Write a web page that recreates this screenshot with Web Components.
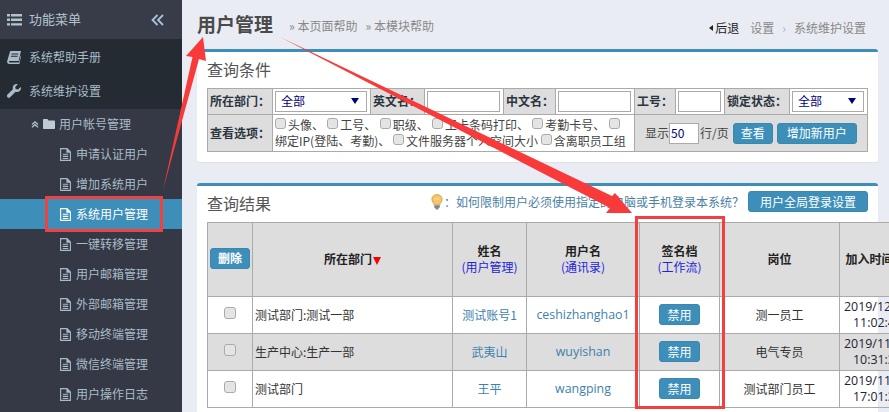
<!DOCTYPE html>
<html>
<head>
<meta charset="utf-8">
<title>用户管理</title>
<style>
html, body { margin: 0; height: 100%; overflow: hidden; }
body { font: 12px "Noto Sans CJK SC", "Noto Sans", sans-serif; background: #e9edf3; color: #333; }
</style>
</head>
<body>
<app-shell>
	<side-menu slot="side">
		<side-head>功能菜单</side-head>
		<side-group>
			<side-item icon="book">系统帮助手册</side-item>
			<side-item icon="wrench">系统维护设置</side-item>
		</side-group>
		<side-sub>用户帐号管理</side-sub>
		<side-leaf>申请认证用户</side-leaf>
		<side-leaf>增加系统用户</side-leaf>
		<side-leaf active>系统用户管理</side-leaf>
		<side-leaf>一键转移管理</side-leaf>
		<side-leaf>用户邮箱管理</side-leaf>
		<side-leaf>外部邮箱管理</side-leaf>
		<side-leaf>移动终端管理</side-leaf>
		<side-leaf>微信终端管理</side-leaf>
		<side-leaf>用户操作日志</side-leaf>
	</side-menu>
	<page-head></page-head>
	<query-panel></query-panel>
	<result-panel></result-panel>
	<note-arrows slot="over"></note-arrows>
</app-shell>

<script>
const blue = '#3d8fba';

const icons = {
	list: '<svg viewBox="0 0 15 12" width="15" height="12"><path fill="currentColor" d="M0 0h3v2.4H0zM4 0h11v2.4H4zM0 4.6h3V7H0zM4 4.6h11V7H4zM0 9.2h3v2.4H0zM4 9.2h11v2.4H4z"/></svg>',
	chevrons: '<svg viewBox="0 0 13 12" width="13" height="12"><path fill="none" stroke="currentColor" stroke-width="1.8" d="M6.5 1 1.5 6l5 5M12 1 7 6l5 5"/></svg>',
	book: '<svg viewBox="0 0 14 13" width="14" height="13"><path fill="currentColor" d="M3.2 0H14l-2.4 10H2.6C1.8 10 1.7 11.4 2.6 11.4H12L13.6 4.6 14 5 12.4 13H2.2C.6 13-.3 11.600 .2 10zM4.600 2.400 4.400 3.400h6.800l.2-1zM4 4.800 3.800 5.800h6.800l.2-1z"/></svg>',
	wrench: '<svg viewBox="0 0 14 14" width="14" height="14"><path fill="currentColor" d="M13.700 3.100 11 5.600 8.700 5.100 8.200 2.900 10.800.3C8.700-.4 6.300.8 5.800 3c-.2.8-.1 1.500.1 2.200L.5 10.600C-.2 11.300-.2 12.400.500 13.200c.7.700 1.900.7 2.600 0l5.500-5.400c2.300.7 4.700-.500 5.300-2.800.2-.7.100-1.300-.2-1.900z"/></svg>',
	folder: '<svg viewBox="0 0 12 10" width="12" height="10"><path fill="currentColor" d="M0 1C0 .4.400 0 1 0h3.500l1 1.500H11c.6 0 1 .4 1 1V9c0 .6-.4 1-1 1H1c-.6 0-1-.4-1-1z"/></svg>',
	up: '<svg viewBox="0 0 8 7" width="8" height="7"><path fill="none" stroke="currentColor" stroke-width="1.400" d="M1 3.500 4 .9l3 2.600M1 6.300l3-2.600 3 2.600"/></svg>',
	file: '<svg viewBox="0 0 11 13" width="11" height="13"><path fill="none" stroke="currentColor" stroke-width="1.100" d="M.6.600h6.300l3.500 3.400v8.400H.6z"/><path fill="currentColor" d="M6.400.6h1L10.400 4v.7H6.400zM2.800 5.700h5.400v1.100H2.800zM2.800 7.800h5.400v1.100H2.800zM2.800 9.900h5.400v1.100H2.800z"/></svg>',
	bulb: '<svg viewBox="0 0 13 18" width="12" height="16"><path fill="#f6c66a" stroke="#d99a3a" stroke-width=".9" d="M6.500.7C3.200.7.700 3 .7 6c0 2.600 2.200 3.700 2.500 6.200h6.600C10.100 9.700 12.300 8.600 12.300 6 12.300 3 9.800.7 6.500.7z"/><path fill="none" stroke="#fbe7b8" stroke-width="1" d="M4 6.500 5.500 5l1 1.200L7.600 5 9 6.500"/><path fill="#7d8791" d="M3.400 12.600h6.200v3H8.500L7.800 17.500H5.200L4.500 15.600H3.400z"/></svg>'
};

// shared small helper, every element is the same: style + markup in an open root
class Base extends HTMLElement {
	constructor() {
		super();
		this.attachShadow({ mode: 'open' });
	}
	connectedCallback() {
		this.shadowRoot.innerHTML = `<style>${this.css()}</style>${this.html()}`;
	}
	css() { return ':host{display:block}'; }
	html() { return '<slot></slot>'; }
}

class AppShell extends Base {
	css() {
		return `
		:host { display: flex; width: 889px; height: 412px; overflow: hidden; position: relative; }
		.side { flex: 0 0 182px; }
		.main { flex: 1; min-width: 0; padding: 0 11px 0 15px; }
		`;
	}
	html() {
		return `<div class="side"><slot name="side"></slot></div><div class="main"><slot></slot></div><slot name="over"></slot>`;
	}
}
customElements.define('app-shell', AppShell);

class SideMenu extends Base {
	css() {
		return `:host { display: block; height: 412px; background: #353945; color: #a9bcc8; overflow: hidden; }`;
	}
}
customElements.define('side-menu', SideMenu);

class SideHead extends Base {
	css() {
		return `
		:host { display: flex; align-items: center; height: 39px; background: #383c49; color: #b4c4ce; font-size: 13px; padding: 0 18px 0 7px; }
		.t { flex: 1; margin-left: 7px; padding-bottom: 2px; }
		.c { display: flex; color: #a8c4d8; }
		svg { display: block; }
		`;
	}
	html() {
		return `${icons.list}<span class="t"><slot></slot></span><span class="c">${icons.chevrons}</span>`;
	}
}
customElements.define('side-head', SideHead);

class SideGroup extends Base {
	css() { return `:host { display: block; background: #242b33; padding: 1px 0 1px; }`; }
}
customElements.define('side-group', SideGroup);

class SideItem extends Base {
	css() {
		return `
		:host { display: flex; align-items: center; height: 34px; padding-left: 7px; color: #a9bcc8; }
		.i { width: 15px; display: flex; }
		.t { margin-left: 7px; padding-bottom: 1px; }
		`;
	}
	html() {
		return `<span class="i">${icons[this.getAttribute('icon')]}</span><span class="t"><slot></slot></span>`;
	}
}
customElements.define('side-item', SideItem);

class SideSub extends Base {
	css() {
		return `
		:host { display: flex; align-items: center; height: 30px; padding-left: 31px; }
		svg { display: block; }
		.f { margin: 0 4px 0 4px; color: #bfcbd4; }
		.t { padding-bottom: 1px; }
		`;
	}
	html() {
		return `${icons.up}<span class="f">${icons.folder}</span><span class="t"><slot></slot></span>`;
	}
}
customElements.define('side-sub', SideSub);

class SideLeaf extends Base {
	css() {
		return `
		:host { display: flex; align-items: center; height: 30px; padding-left: 60px; }
		:host([active]) { background: ${blue}; color: #fff; }
		.t { margin-left: 5px; padding-bottom: 2px; }
		svg { display: block; }
		`;
	}
	html() {
		return `${icons.file}<span class="t"><slot></slot></span>`;
	}
}
customElements.define('side-leaf', SideLeaf);

class PageHead extends Base {
	css() {
		return `
		:host { display: flex; align-items: flex-end; height: 49px; box-sizing: border-box; padding-bottom: 12px; color: #888; font-size: 12px; }
		h1 { margin: 0 16px 0 0; font-size: 19px; line-height: 26px; font-weight: 700; color: #4a4a4a; }
		.h { margin-right: 8px; line-height: 22px; }
		.r { margin-left: auto; display: flex; gap: 8px; line-height: 22px; padding-right: 12px; margin-bottom: -2px; }
		.back { color: #222; margin-right: 3px; }
		.back i { display: inline-block; border: 3px solid transparent; border-right: 4px solid #222; border-left: 0; margin-right: 2px; vertical-align: 2px; }
		.sep { color: #aab; }
		`;
	}
	html() {
		return `<h1>用户管理</h1><span class="h">» 本页面帮助</span><span class="h">» 本模块帮助</span>
		<div class="r"><span class="back"><i></i>后退</span><span>设置</span><span class="sep">›</span><span>系统维护设置</span></div>`;
	}
}
customElements.define('page-head', PageHead);

class BlueBtn extends Base {
	css() {
		return `
		:host { display: inline-flex; align-items: center; justify-content: center; height: 21px; padding: 0 7px 1px; box-sizing: border-box; background: ${blue}; color: #fff; border-radius: 3px; font-size: 12px; white-space: nowrap; border: 1px solid #3a87b0; vertical-align: middle; }
		`;
	}
}
customElements.define('blue-btn', BlueBtn);

class CheckBox extends Base {
	css() {
		return `:host { display: inline-block; width: 11px; height: 11px; box-sizing: border-box; border: 1px solid #a9a9a9; border-radius: 3px; background: #e4e4e4; vertical-align: 1px; box-shadow: inset 0 0 1px #fff; }`;
	}
	html() { return ''; }
}
customElements.define('check-box', CheckBox);

class SelectBox extends Base {
	css() {
		return `
		:host { display: flex; align-items: center; box-sizing: border-box; height: 21px; border: 1px solid #aaa; background: #fff; color: #00007a; font-size: 12px; padding: 0 7px 1px 5px; }
		.t { flex: 1; }
		i { border: 4px solid transparent; border-top: 6px solid #00007a; border-bottom: 0; }
		`;
	}
	html() { return `<span class="t"><slot></slot></span><i></i>`; }
}
customElements.define('select-box', SelectBox);

class TextBox extends Base {
	css() {
		return `:host { display: block; box-sizing: border-box; height: 21px; border: 1px solid #aaa; background: #fff; color: #00007a; }`;
	}
}
customElements.define('text-box', TextBox);

const panelCss = `
	:host { display: block; background: #fff; border-top: 3px solid ${blue}; border-radius: 3px; box-shadow: 0 1px 1px rgba(0,0,0,.06); }
	h2 { margin: 0; font-weight: 400; font-size: 16px; color: #555; }
	table { border-collapse: collapse; table-layout: fixed; }
	td, th { border: 1px solid #aaa; padding: 0; }
`;

class QueryPanel extends Base {
	css() {
		return panelCss + `
		:host { height: 113px; box-sizing: border-box; margin-bottom: 21px; padding: 4px 10px 0; font-size: 12px; color: #444; }
		h2 { line-height: 26px; margin-bottom: 6px; }
		table { width: 660px; line-height: 14px; }
		.l { background: #ddd; font-weight: 700; color: #2b3540; padding: 0 0 1px 2px; white-space: nowrap; font-size: 12px; }
		.f { padding: 0 3px 0 2px; }
		tr.a { height: 26px; }
		tr.b { height: 37px; }
		.opts { padding: 0 0 1px 2px; font-size: 12px; line-height: 16px; }
		.opts span { margin-right: .6px; }
		.opts check-box { margin-right: 2px; }
		.show { background: #ddd; color: #444; }
		.show div { display: flex; align-items: center; padding-left: 10px; white-space: nowrap; }
		.show text-box { flex: 0 0 30px; line-height: 18px; font-size: 12px; padding-left: 1px; margin-right: 1px; }
		.show blue-btn { margin-left: 4px; }
		.show .w { width: 80px; }
		`;
	}
	html() {
		return `<h2>查询条件</h2>
		<table>
			<colgroup><col style="width:65px"><col style="width:98px"><col style="width:54px"><col style="width:79px"><col style="width:52px"><col style="width:79px"><col style="width:41px"><col style="width:49px"><col style="width:65px"><col style="width:78px"></colgroup>
			<tr class="a">
				<td class="l">所在部门：</td><td class="f"><select-box>全部</select-box></td>
				<td class="l">英文名：</td><td class="f"><text-box></text-box></td>
				<td class="l">中文名：</td><td class="f"><text-box></text-box></td>
				<td class="l">工号：</td><td class="f"><text-box></text-box></td>
				<td class="l">锁定状态：</td><td class="f"><select-box>全部</select-box></td>
			</tr>
			<tr class="b">
				<td class="l">查看选项：</td>
				<td class="opts" colspan="5"><span><check-box></check-box>头像、</span> <span><check-box></check-box>工号、</span> <span><check-box></check-box>职级、</span> <span><check-box></check-box>工卡条码打印、</span> <span><check-box></check-box>考勤卡号、</span> <check-box></check-box><br>绑定IP(登陆、考勤)、 <check-box></check-box>文件服务器个人空间大小 <check-box></check-box>含离职员工组</td>
				<td class="show" colspan="4"><div>显示<text-box>50</text-box>行/页<blue-btn>查看</blue-btn><blue-btn class="w">增加新用户</blue-btn></div></td>
			</tr>
		</table>`;
	}
}
customElements.define('query-panel', QueryPanel);

const users = [
	['测试部门:测试一部', '测试账号1', 'ceshizhanghao1', '测一员工', '2019/12/16', '11:02:45'],
	['生产中心:生产一部', '武夷山', 'wuyishan', '电气专员', '2019/11/28', '10:31:36'],
	['测试部门', '王平', 'wangping', '测试部门员工', '2019/11/28', '17:01:32']
];

class ResultPanel extends Base {
	css() {
		return panelCss + `
		:host { height: 260px; box-sizing: border-box; padding: 0 0 0 10px; font-size: 12px; }
		.top { display: flex; align-items: center; box-sizing: border-box; height: 36px; padding: 0 10px 5px 0; }
		h2 { flex: 1; line-height: 26px; margin-top: 3px; }
		.tip { color: #4a7fa7; display: flex; align-items: center; gap: 1px; margin-right: 4px; }
		.tip svg { display: block; }
		.top blue-btn { width: 120px; }
		table { width: 692px; text-align: center; color: #333; }
		thead tr { height: 74px; }
		tbody tr { height: 37px; }
		th { background: #ddd; font-size: 12px; line-height: 16px; color: #222; padding-bottom: 2px; }
		th a { display: block; font-weight: 400; color: #2222dd; }
		td { padding-bottom: 1px; }
		tbody tr:nth-child(even) td { background: #ddd; }
		td check-box { width: 12px; height: 12px; }
		.dep { text-align: left; padding-left: 2px; }
		.name { color: #3d7fae; }
		.acct { color: #3d7fae; font-family: "Open Sans", sans-serif; font-size: 12.4px; }
		.time { font-family: "Open Sans", sans-serif; font-size: 12.4px; line-height: 16px; white-space: nowrap; color: #223; text-align: left; padding-left: 4px; }
		.time span { display: block; }
		.time span + span { padding-left: 9px; }
		.tri { display: inline-block; border: 4px solid transparent; border-top: 8px solid #f00; border-bottom: 0; vertical-align: -1px; margin-left: 1px; }
		`;
	}
	html() {
		const rows = users.map(u => `
			<tr>
				<td><check-box></check-box></td>
				<td class="dep">${u[0]}</td>
				<td class="name">${u[1]}</td>
				<td class="acct">${u[2]}</td>
				<td><blue-btn>禁用</blue-btn></td>
				<td>${u[3]}</td>
				<td class="time"><span>${u[4]}</span><span>${u[5]}</span></td>
			</tr>`).join('');
		return `<div class="top"><h2>查询结果</h2><span class="tip">${icons.bulb}<span>：如何限制用户必须使用指定的电脑或手机登录本系统？</span></span><blue-btn>用户全局登录设置</blue-btn></div>
		<table>
			<colgroup><col style="width:45px"><col style="width:200px"><col style="width:74px"><col style="width:113px"><col style="width:80px"><col style="width:120px"><col style="width:60px"></colgroup>
			<thead><tr>
				<th><blue-btn>删除</blue-btn></th>
				<th>所在部门<i class="tri"></i></th>
				<th>姓名<a>(用户管理)</a></th>
				<th>用户名<a>(通讯录)</a></th>
				<th>签名档<a>(工作流)</a></th>
				<th>岗位</th>
				<th>加入时间</th>
			</tr></thead>
			<tbody>${rows}</tbody>
		</table>`;
	}
}
customElements.define('result-panel', ResultPanel);

// red annotations drawn over the screenshot
class NoteArrows extends Base {
	css() {
		return `
		:host { position: absolute; left: 0; top: 0; width: 889px; height: 412px; pointer-events: none; }
		svg { display: block; }
		`;
	}
	html() {
		return `<svg width="889" height="412" viewBox="0 0 889 412">
			<g fill="none" stroke="#f04040" stroke-width="3">
				<rect x="46.500" y="197.500" width="115" height="33"/>
				<rect x="636.500" y="217.500" width="87" height="190"/>
			</g>
			<path fill="#f83a3a" d="M163 190 192.500 57 186 56 203 37 206 61 199 59z"/>
			<path fill="#f83a3a" d="M280 37 612 196 615 193 632 213 606 213 610 208z"/>
		</svg>`;
	}
}
customElements.define('note-arrows', NoteArrows);
</script>
</body>
</html>
